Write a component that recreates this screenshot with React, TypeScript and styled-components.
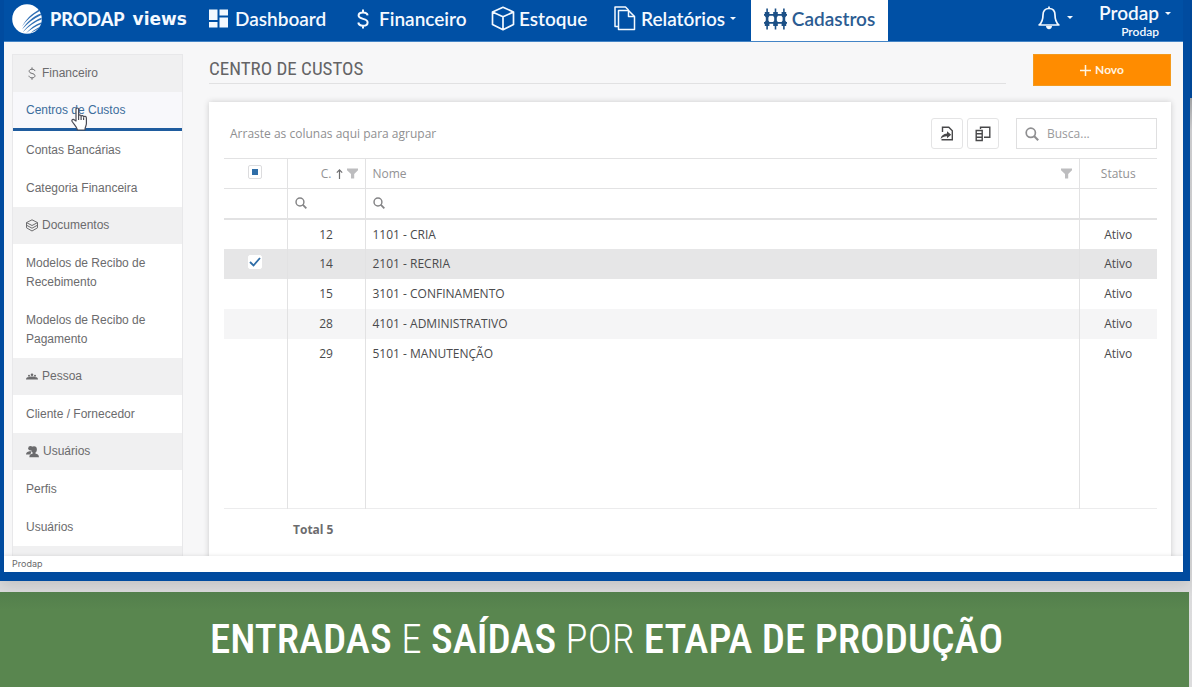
import React from 'react';
import styled, { createGlobalStyle, css } from 'styled-components';

const BLUE = '#004b9f';
const LINE = '#e2e2e3';
const uiFont = '"Liberation Sans", Arial, sans-serif';
const navFont = 'Lato, "Open Sans", sans-serif';
const gridFont = '"Open Sans", "Noto Sans", sans-serif';
const narrowFont = '"Liberation Sans Narrow", "Roboto Condensed", "Liberation Sans", sans-serif';

const GlobalStyle = createGlobalStyle`
  *, *::before, *::after { box-sizing: border-box; }
  body { margin: 0; font-family: ${uiFont}; background: #dcdcdd; }
  button, input { font: inherit; color: inherit; }
  a { color: inherit; text-decoration: none; }
`;

const Page = styled.div`
  height: 100vh;
  display: flex;
  flex-direction: column;
  gap: 11px;
  padding-right: 2px;
  overflow: hidden;
  background: linear-gradient(${BLUE} 0 98px, #a9abad 98px, #d6d6d8 130px, #dcdcdd);
`;

const Frame = styled.div`
  flex: 1;
  min-height: 0;
  display: flex;
  flex-direction: column;
  border: solid ${BLUE};
  border-width: 0 7px 9px 4px;
  background: #f7f7f8;
  box-shadow: 0 4px 14px rgba(0, 0, 0, 0.12);
`;

/* Top bar */
const TopBar = styled.header`
  flex: none;
  height: 42px;
  display: flex;
  padding-left: 8px;
  padding-right: 12px;
  background: #0050a5;
  border-bottom: 1px solid #4384c6;
  color: #f4f9ff;
  font-family: ${navFont};
`;

const Brand = styled.a`
  flex: 0 0 197px;
  display: flex;
  align-items: center;
  gap: 8px;
  padding-bottom: 3px;
  white-space: nowrap;
`;

const BrandName = styled.span`
  font-size: 18px;
  line-height: 20px;
  font-weight: 900;
`;

const BrandProduct = styled.span`
  font-family: "DejaVu Sans", sans-serif;
  font-size: 17px;
  line-height: 20px;
  font-weight: 700;
`;

const Nav = styled.nav`
  display: flex;
  flex: 1;
`;

const NavItem = styled.a<{ $basis: number; $gap: number; $active?: boolean }>`
  flex: 0 0 ${p => p.$basis}px;
  display: flex;
  align-items: center;
  gap: ${p => p.$gap}px;
  padding-bottom: 4px;
  font-size: 19px;
  font-weight: 600;
  white-space: nowrap;
  ${p => p.$active && css`
    justify-content: center;
    background: #fff;
    color: #2b5c92;
  `}
`;

const Caret = styled.span`
  flex: none;
  width: 0;
  height: 0;
  border: 3px solid transparent;
  border-top-color: currentColor;
  border-bottom: 0;
`;

const BarButton = styled.button`
  display: flex;
  align-items: center;
  gap: 7px;
  padding: 0 0 6px;
  border: 0;
  background: none;
`;

const Account = styled.button`
  display: grid;
  grid-template-columns: auto auto;
  column-gap: 6px;
  align-items: center;
  align-content: start;
  justify-items: end;
  margin-left: 26px;
  padding: 2px 0 0;
  border: 0;
  background: none;
  font-weight: 600;
`;

const AccountName = styled.span`
  font-size: 19px;
  line-height: 22px;
`;

const AccountFarm = styled.span`
  font-size: 12px;
  line-height: 15px;
`;

/* Body */
const Body = styled.div`
  flex: 1;
  min-height: 0;
  display: flex;
  gap: 26px;
  padding: 12px 12px 0 8px;
  overflow: hidden;
`;

const Sidebar = styled.nav`
  flex: 0 0 171px;
  border: solid #e8e8ea;
  border-width: 1px 1px 0;
  background: #fff;
  color: #6b6b6d;
  font-size: 12px;
  line-height: 19px;
  overflow: hidden;
`;

const SideHead = styled.div`
  height: 37px;
  display: flex;
  align-items: center;
  gap: 4px;
  padding-left: 13px;
  background: #f0f0f1;
  svg { flex: none; }
`;

const SideLink = styled.a<{ $active?: boolean }>`
  position: relative;
  display: block;
  padding: 10px 30px 9px 13px;
  ${p => p.$active && css`
    padding: 9px 13px 8px;
    border-bottom: 3px solid #1f5c9e;
    background: #f8f8fb;
    color: #3c6d9c;
  `}
`;

const Pointer = styled.svg`
  position: absolute;
  left: 58px;
  top: 15px;
`;

const Main = styled.main`
  flex: 1;
  min-width: 0;
  display: flex;
  flex-direction: column;
  gap: 16px;
`;

const Heading = styled.div`
  display: flex;
  gap: 27px;
  align-items: flex-start;
`;

const Title = styled.h1`
  flex: 1;
  height: 30px;
  margin: 0;
  border-bottom: 1px solid #e1e1e2;
  color: #646466;
  font: 400 19px/29px ${narrowFont};
`;

const NewButton = styled.button`
  width: 138px;
  height: 32px;
  display: flex;
  align-items: center;
  justify-content: center;
  gap: 4px;
  border: 1px solid #f39a1e;
  background: #ff8c00;
  color: #fff4e0;
  font: 700 12px/16px ${navFont};
`;

const Card = styled.section`
  flex: 1 0 auto;
  padding: 16px 14px 12px 15px;
  background: #fff;
  box-shadow: 0 0 6px rgba(0, 0, 0, 0.18);
  font-family: ${gridFont};
  font-size: 12px;
  color: #4a4a4c;
`;

const Toolbar = styled.div`
  display: flex;
  align-items: center;
  height: 31px;
  margin-bottom: 9px;
  padding-left: 6px;
  color: #8f8f91;
`;

const GroupHint = styled.span`
  flex: 1;
`;

const IconButton = styled.button`
  width: 32px;
  height: 31px;
  display: grid;
  place-items: center;
  margin-right: 4px;
  padding: 0;
  border: 1px solid #e4e4e5;
  border-radius: 3px;
  background: #fff;
  color: #48484a;
`;

const Search = styled.label`
  width: 141px;
  height: 31px;
  display: flex;
  align-items: center;
  gap: 8px;
  margin-left: 13px;
  padding: 0 8px;
  border: 1px solid #dfdfe0;
`;

const TextInput = styled.input`
  flex: 1;
  min-width: 0;
  width: 100%;
  padding: 0;
  border: 0;
  outline: 0;
  background: none;
  &::placeholder { color: #9a9a9c; opacity: 1; }
`;

const Grid = styled.table`
  width: 100%;
  table-layout: fixed;
  border-collapse: collapse;
`;

const Row = styled.tr<{ $tone?: string }>`
  height: 30px;
  background: ${p => p.$tone || 'transparent'};
`;

const HeadRow = styled(Row)`
  border-top: 1px solid ${LINE};
  border-bottom: 1px solid ${LINE};
  color: #929294;
`;

const FilterRow = styled(Row)`
  border-bottom: 2px solid ${LINE};
  color: #848486;
`;

const FillerRow = styled.tr`
  height: 140px;
  border-bottom: 1px solid #ececed;
`;

const cell = css<{ $align?: string }>`
  padding: 0 7px;
  border-left: 1px solid ${LINE};
  text-align: ${p => p.$align || 'left'};
  font-weight: 400;
  &:first-child { border-left: 0; }
`;
const Th = styled.th`${cell}`;
const Td = styled.td`${cell}`;

const HeadCell = styled.div<{ $end?: boolean }>`
  display: flex;
  align-items: center;
  gap: 4px;
  justify-content: ${p => (p.$end ? 'flex-end' : 'space-between')};
`;

const FilterCell = styled.label`
  display: flex;
  align-items: center;
  gap: 6px;
  svg { flex: none; }
`;

const Tick = styled.label`
  position: relative;
  display: inline-grid;
  vertical-align: top;
  svg { position: absolute; inset: 0; pointer-events: none; }
`;

const TickInput = styled.input<{ $plain?: boolean }>`
  appearance: none;
  width: 14px;
  height: 14px;
  margin: 0;
  border: 1px solid ${p => (p.$plain ? '#fff' : '#dcdcde')};
  border-radius: 2px;
  background: #fff;
`;

const Total = styled.div`
  padding: 12px 0 12px 69px;
  font-weight: 700;
  line-height: 18px;
  color: #6c6c6e;
`;

const StatusBar = styled.footer`
  flex: none;
  position: relative;
  height: 16px;
  padding-left: 8px;
  background: #fff;
  box-shadow: 0 -1px 3px rgba(0, 0, 0, 0.08);
  color: #6a6a6c;
  font: 400 9px/16px Inter, sans-serif;
`;

const Banner = styled.section`
  flex: 0 0 95px;
  margin-right: 1px;
  padding-left: 24px;
  background: linear-gradient(#537f4c, #59864f 18px);
  color: #fff;
  text-align: center;
  white-space: nowrap;
  font: 500 41px/95px ${narrowFont};
  position: relative;
`;

const Thin = styled.span`
  font-weight: 300;
`;

/* Icons */
const Lens = ({ size }: { size: number }) => (
  <svg width={size} height={size} viewBox="0 0 14 14" fill="none" stroke="currentColor" strokeWidth="1.700">
    <circle cx="5.8" cy="5.8" r="4.6" />
    <path d="M9 9 13.200 13.200" strokeWidth="2.100" />
  </svg>
);

const Funnel = () => (
  <svg width="11" height="11" viewBox="0 0 11 11" fill="#bdbdbf">
    <path d="M0 0.5h11v1.7L7.2 6v4.5H4V6L0 2.2z" />
  </svg>
);

const Dollar = ({ w, h, weight }: { w: number; h: number; weight: number }) => (
  <svg width={w} height={h} viewBox="0 0 12 20" fill="none" stroke="currentColor" strokeWidth={weight}>
    <path d="M10.6 6.3C10.3 4.4 8.6 3.4 6 3.4S1.6 4.6 1.6 6.6c0 4.4 9 2.2 9 6.8 0 2-1.8 3.3-4.6 3.3-2.7 0-4.4-1.2-4.7-3.2M6 .6v3M6 16.6v3" />
  </svg>
);

const BrandMark = () => (
  <svg width="30" height="30" viewBox="0 0 30 30">
    <circle cx="15" cy="15" r="14.8" fill="#fff" />
    <g fill="#2f6fb5">
      <path d="M10 22.500C14 15.500 19 10 26.800 5.800l.9 1.300C20 11 14.500 16.500 10 22.500z" />
      <path d="M10 25.500C15 18 20.500 13 28.600 9.600l.6 1.400C21.500 14.500 15.500 19.500 10 25.500z" />
      <path d="M11 28C16 21.500 22 16.500 29.600 13.800l.2 1.500C23 18 16.500 22.500 11 28z" />
      <path d="M14 29.300C18 24.500 23 20.500 29.600 18.200l-.4 1.700C24 22 18.500 25 14 29.300z" />
      <path d="M18.500 29.200C21.500 26.300 24.500 24.200 28.300 22.800l-1.100 1.800C24 26 21.500 27.500 18.500 29.200z" />
    </g>
  </svg>
);

const TilesIcon = () => (
  <svg width="19" height="19" viewBox="0 0 19 19" fill="currentColor">
    <path d="M0 .5h8.500v10.500H0zM10.500 .5H19v6h-8.500zM0 13h8.500v5.500H0zM10.500 8.500H19v10h-8.500z" />
  </svg>
);

const BoxIcon = () => (
  <svg width="24" height="25" viewBox="0 0 24 25" fill="none" stroke="currentColor" strokeWidth="1.7" strokeLinejoin="round">
    <path d="M12 1.300 22.500 6v12.500L12 23.700 1.500 18.500V6zM1.500 6 12 10.800 22.500 6M12 10.800v12.900" />
  </svg>
);

const PagesIcon = () => (
  <svg width="22" height="25" viewBox="0 0 22 25" fill="none" stroke="currentColor" strokeWidth="1.5" strokeLinejoin="round">
    <path d="M4.500 4.500h10l6 6v13h-16z" />
    <path d="M14.500 4.500v6h6M4 20.500H1V1h10.500l3 3" />
  </svg>
);

const FenceIcon = () => (
  <svg width="23" height="22" viewBox="0 0 23 22" fill="#1c5086">
    <path d="M0 6h23v1.800H0zM0 14h23v1.800H0z" />
    {[0.8, 9.2, 17.6].map(x => (
      <path key={x} d={`M${x} 4h1.500V.5h1.600V4h1.500v4l-1 1.500v3l1 1.500v4h-1.500v3.500h-1.600V18H${x}v-4l1-1.500v-3L${x} 8z`} />
    ))}
  </svg>
);

const BellIcon = () => (
  <svg width="22" height="24" viewBox="0 0 22 24" fill="none" stroke="currentColor" strokeWidth="1.700" strokeLinejoin="round">
    <path d="M11 2.500c-4 0-6 2.800-6 6.500 0 5-1 7.500-3.800 10h19.600C18 16.500 17 14 17 9c0-3.700-2-6.500-6-6.500z" />
    <path d="M11 .5v2" />
    <path d="M8 20h6c0 2-1.300 3.200-3 3.200S8 22 8 20z" fill="currentColor" stroke="none" />
  </svg>
);

const LayersIcon = () => (
  <svg width="12" height="13" viewBox="0 0 12 13" fill="none" stroke="currentColor" strokeWidth="1" strokeLinejoin="round">
    <path d="M6 .8 11.500 3.600 6 6.500.5 3.600zM.5 3.600v5.200L6 12l5.500-3.200V3.600M.5 6.200 6 9.200l5.500-3" />
  </svg>
);

const GroupIcon = () => (
  <svg width="12" height="7" viewBox="0 0 12 7" fill="currentColor">
    <circle cx="6" cy="1.800" r="1.300" /><circle cx="3" cy="2.800" r="1" /><circle cx="9" cy="2.800" r="1" />
    <path d="M0 6.500C0 4.800 1 4.200 2.200 4.200 3.600 3.100 8.400 3.100 9.800 4.200 11 4.200 12 4.800 12 6.500z" />
  </svg>
);

const UsersIcon = () => (
  <svg width="13" height="13" viewBox="0 0 13 13" fill="currentColor">
    <circle cx="4.500" cy="3.200" r="2.300" />
    <path d="M0 9.500C0 7.500 1.500 6.800 3.300 6.300h2.200L4.300 9.500z" />
    <path d="M8 1.200c1.800 0 2.900 1.200 2.900 3.200 0 1.600-.7 2.600-1.500 3.200v1c1.900.5 3.400 1 3.600 3.700H3.300c.2-2.700 1.500-3.200 3.400-3.700v-1C5.800 7 5.200 6 5.200 4.400c0-2 1-3.200 2.800-3.200z" />
  </svg>
);

const ExportIcon = () => (
  <svg width="14" height="15" viewBox="0 0 14 15" fill="none" stroke="currentColor" strokeWidth="1.400">
    <path d="M2.500 6V1.200h6.300l3.500 3.500v9H1.500" />
    <path d="M7 5.300 11.200 8.800 7 12.200v-2C4.500 10.100 2.600 10.900.6 13 1 9.900 3.400 7.800 7 7.500z" fill="currentColor" stroke="none" />
  </svg>
);

const ColumnsIcon = () => (
  <svg width="16" height="16" viewBox="0 0 16 16" fill="none" stroke="currentColor" strokeWidth="1.400">
    <path d="M5.500 3V1.200h9.300v10H9M1.200 4.500h6v10h-6zM1.200 7.800h6M1.200 11.200h6" />
  </svg>
);

const rows = [
  { id: 12, name: '1101 - CRIA' },
  { id: 14, name: '2101 - RECRIA', selected: true },
  { id: 15, name: '3101 - CONFINAMENTO' },
  { id: 28, name: '4101 - ADMINISTRATIVO', striped: true },
  { id: 29, name: '5101 - MANUTENÇÃO' },
];

export default function App() {
  return (
    <Page>
      <GlobalStyle />
      <Frame>
        <TopBar>
          <Brand href="#">
            <BrandMark />
            <BrandName>PRODAP</BrandName>
            <BrandProduct>views</BrandProduct>
          </Brand>
          <Nav>
            <NavItem href="#" $basis={148} $gap={7}><TilesIcon />Dashboard</NavItem>
            <NavItem href="#" $basis={134} $gap={10}><Dollar w={12} h={20} weight={2} />Financeiro</NavItem>
            <NavItem href="#" $basis={123} $gap={4}><BoxIcon />Estoque</NavItem>
            <NavItem href="#" $basis={137} $gap={5}><PagesIcon />Relatórios<Caret /></NavItem>
            <NavItem href="#" $basis={137} $gap={5} $active><FenceIcon />Cadastros</NavItem>
          </Nav>
          <BarButton aria-label="Notificações"><BellIcon /><Caret /></BarButton>
          <Account>
            <AccountName>Prodap</AccountName><Caret />
            <AccountFarm>Prodap</AccountFarm>
          </Account>
        </TopBar>
        <Body>
          <Sidebar>
            <SideHead><Dollar w={12} h={13} weight={1.5} />Financeiro</SideHead>
            <SideLink href="#" $active>
              Centros de Custos
              <Pointer width="17" height="24" viewBox="0 0 17 24" fill="#fff" stroke="#4b4b55" strokeWidth="1.200" strokeLinejoin="round">
                <path d="M5 14V2.500c0-2 2.600-2 2.600 0V9c.3-1.500 2.500-1.300 2.500.3.500-1.200 2.500-.9 2.500.7.600-1 2.800-.8 2.800 1v5.500c0 2-1.200 3-1.500 6.500H6.500C5.500 19.500 3 17.500 1.200 14.500c-1-1.800 1-3 2.300-1.500z" />
                <path d="M7.600 9v4M10.100 9.500v3.500M12.600 10.500V13" fill="none" />
              </Pointer>
            </SideLink>
            <SideLink href="#">Contas Bancárias</SideLink>
            <SideLink href="#">Categoria Financeira</SideLink>
            <SideHead><LayersIcon />Documentos</SideHead>
            <SideLink href="#">Modelos de Recibo de Recebimento</SideLink>
            <SideLink href="#">Modelos de Recibo de Pagamento</SideLink>
            <SideHead><GroupIcon />Pessoa</SideHead>
            <SideLink href="#">Cliente / Fornecedor</SideLink>
            <SideHead><UsersIcon />Usuários</SideHead>
            <SideLink href="#">Perfis</SideLink>
            <SideLink href="#">Usuários</SideLink>
            <SideHead />
          </Sidebar>
          <Main>
            <Heading>
              <Title>CENTRO DE CUSTOS</Title>
              <NewButton>
                <svg width="11" height="11" viewBox="0 0 11 11" stroke="currentColor" strokeWidth="1.500"><path d="M5.500 0v11M0 5.500h11" /></svg>
                Novo
              </NewButton>
            </Heading>
            <Card>
              <Toolbar>
                <GroupHint>Arraste as colunas aqui para agrupar</GroupHint>
                <IconButton aria-label="Exportar"><ExportIcon /></IconButton>
                <IconButton aria-label="Seletor de colunas"><ColumnsIcon /></IconButton>
                <Search>
                  <Lens size={14} />
                  <TextInput type="text" placeholder="Busca..." aria-label="Busca" />
                </Search>
              </Toolbar>
              <Grid>
                <colgroup>
                  <col style={{ width: 63 }} />
                  <col style={{ width: 78 }} />
                  <col />
                  <col style={{ width: 78 }} />
                </colgroup>
                <thead>
                  <HeadRow>
                    <Th $align="center">
                      <Tick>
                        <TickInput type="checkbox" aria-label="Selecionar todos" />
                        <svg width="14" height="14" viewBox="0 0 14 14"><path d="M4 4h6v6H4z" fill="#2f6ea8" /></svg>
                      </Tick>
                    </Th>
                    <Th>
                      <HeadCell $end>
                        C.
                        <svg width="7" height="10" viewBox="0 0 7 10" fill="none" stroke="#6e6e70" strokeWidth="1.200"><path d="M3.500 10V1M.8 3.600 3.500.9l2.700 2.700" /></svg>
                        <Funnel />
                      </HeadCell>
                    </Th>
                    <Th><HeadCell>Nome<Funnel /></HeadCell></Th>
                    <Th $align="center">Status</Th>
                  </HeadRow>
                  <FilterRow>
                    <Td />
                    <Td><FilterCell><Lens size={12} /><TextInput type="text" aria-label="Filtrar código" /></FilterCell></Td>
                    <Td><FilterCell><Lens size={12} /><TextInput type="text" aria-label="Filtrar nome" /></FilterCell></Td>
                    <Td />
                  </FilterRow>
                </thead>
                <tbody>
                  {rows.map(r => (
                    <Row key={r.id} $tone={r.selected ? '#e6e6e7' : r.striped ? '#f5f5f6' : undefined}>
                      <Td $align="center">
                        {r.selected && (
                          <Tick>
                            <TickInput type="checkbox" defaultChecked $plain aria-label={`Selecionar ${r.name}`} />
                            <svg width="14" height="14" viewBox="0 0 14 14" fill="none" stroke="#2f6ea8" strokeWidth="1.800"><path d="M2 7l3.500 3.500L12 3" /></svg>
                          </Tick>
                        )}
                      </Td>
                      <Td $align="center">{r.id}</Td>
                      <Td>{r.name}</Td>
                      <Td $align="center">Ativo</Td>
                    </Row>
                  ))}
                  <FillerRow aria-hidden="true"><Td /><Td /><Td /><Td /></FillerRow>
                </tbody>
              </Grid>
              <Total>Total 5</Total>
            </Card>
          </Main>
        </Body>
        <StatusBar>Prodap</StatusBar>
      </Frame>
      <Banner>
        ENTRADAS <Thin>E</Thin> SAÍDAS <Thin>POR</Thin> ETAPA DE PRODUÇÃO
      </Banner>
    </Page>
  );
}
